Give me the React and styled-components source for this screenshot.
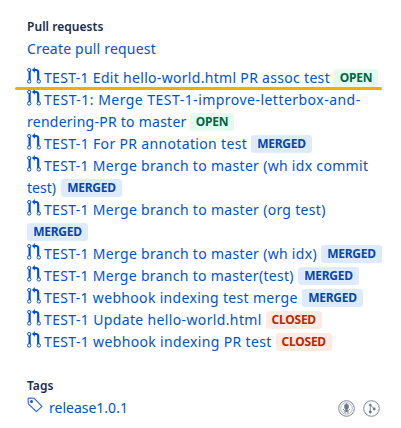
import React from "react";
import styled, { createGlobalStyle } from "styled-components";

const GlobalStyle = createGlobalStyle`
  * { box-sizing: border-box; }
  body {
    margin: 0;
    background: #fff;
    font-family: "Segoe UI", "Noto Sans", "Open Sans", sans-serif;
  }
`;

const Panel = styled.main`
  position: relative;
  width: 401px;
  height: 428px;
  padding: 17px 21px 0 27px;
  color: #172b4d;
  font-size: 14px;
  line-height: 22px;
`;

const Heading = styled.h2`
  margin: 0;
  font-size: 12px;
  line-height: 20px;
  font-weight: 600;
  letter-spacing: ${(p) => p.$track || 0}px;
`;

const Link = styled.a`
  display: block;
  color: #0052cc;
  text-decoration: none;
  white-space: nowrap;
  letter-spacing: ${(p) => p.$track || 0}px;
`;

const CreateLink = styled(Link)`
  padding-top: 1px;
`;

const PullList = styled.ul`
  list-style: none;
  margin: 6px 0 0;
  padding: 0;
`;

const PullItem = styled.li`
  display: block;
`;

const Line = styled.div`
  display: flex;
  height: 22px;
  color: #0052cc;
  white-space: nowrap;
`;

const LineText = styled.span`
  flex: none;
  width: ${(p) => p.$width}px;
  line-height: 24px;
  letter-spacing: ${(p) => p.$track || 0}px;
`;

const PullIcon = styled.svg`
  flex: none;
  width: 14px;
  height: 17px;
  margin: 1px 3px 0 0;
`;

const tones = {
  OPEN: { bg: "#e3fcef", fg: "#006644", width: 44 },
  MERGED: { bg: "#deebff", fg: "#0747a6", width: 61 },
  CLOSED: { bg: "#ffebe6", fg: "#bf2600", width: 55.5 },
};

const Badge = styled.span`
  flex: none;
  width: ${(p) => tones[p.$tone].width}px;
  height: 18px;
  margin-top: 3px;
  border-radius: 3px;
  background: ${(p) => tones[p.$tone].bg};
  color: ${(p) => tones[p.$tone].fg};
  font-size: 12px;
  line-height: 18px;
  font-weight: 700;
  text-align: center;
  letter-spacing: -0.25px;
`;

const Underline = styled.div`
  position: absolute;
  left: 15px;
  top: 87px;
  width: 367px;
  height: 3px;
  border-radius: 2px;
  background: #faa90b;
`;

const TagSection = styled.section`
  margin-top: 24px;
`;

const TagRow = styled.div`
  display: flex;
  justify-content: space-between;
  height: 24px;
`;

const TagLink = styled(Link)`
  display: flex;
  gap: 6px;
  line-height: 24px;
`;

const TagIcon = styled.svg`
  width: 16px;
  height: 16px;
  margin-top: 1px;
`;

const Tools = styled.div`
  display: flex;
  gap: 8px;
  margin-top: 4px;
`;

const ToolIcon = styled.svg`
  width: 17px;
  height: 17px;
`;

function PullRequestGlyph() {
  return (
    <PullIcon viewBox="0 0 14 17" fill="none" stroke="#0052cc">
      <path d="M2.6 4V13" strokeWidth="2.2" />
      <path d="M6.5 3H9.2Q11.2 3 11.2 5.4V13" strokeWidth="2.2" />
      <path d="M7.9 0.3L5 3L7.9 5.6Z" fill="#0052cc" strokeWidth="0.2" />
      <circle cx="2.2" cy="3" r="1.6" fill="#fff" strokeWidth="1" />
      <circle cx="2.2" cy="14.4" r="1.7" fill="#fff" strokeWidth="1" />
      <circle cx="11.8" cy="14.4" r="1.7" fill="#fff" strokeWidth="1" />
    </PullIcon>
  );
}

const pulls = [
  [{ text: "TEST-1 Edit hello-world.html PR assoc test", width: 290, track: 0.31, status: "OPEN" }],
  [
    { text: "TEST-1: Merge TEST-1-improve-letterbox-and-", width: 330, track: 0.47 },
    { text: "rendering-PR to master", width: 163, track: 0.25, status: "OPEN" },
  ],
  [{ text: "TEST-1 For PR annotation test", width: 207, track: 0.34, status: "MERGED" }],
  [
    { text: "TEST-1 Merge branch to master (wh idx commit", width: 330, track: 0.31 },
    { text: "test)", width: 34, status: "MERGED" },
  ],
  [
    { text: "TEST-1 Merge branch to master (org test)", width: 300, track: 0.31 },
    { text: "", width: 0, status: "MERGED" },
  ],
  [{ text: "TEST-1 Merge branch to master (wh idx)", width: 277, track: 0.31, status: "MERGED" }],
  [{ text: "TEST-1 Merge branch to master(test)", width: 254, track: 0.3, status: "MERGED" }],
  [{ text: "TEST-1 webhook indexing test merge", width: 258, track: 0.32, status: "MERGED" }],
  [{ text: "TEST-1 Update hello-world.html", width: 222, track: 0.36, status: "CLOSED" }],
  [{ text: "TEST-1 webhook indexing PR test", width: 232, track: 0.35, status: "CLOSED" }],
];

export default function App() {
  return (
    <>
      <GlobalStyle />
      <Panel>
        <Heading $track={0.05}>Pull requests</Heading>
        <CreateLink $track={0.2}>Create pull request</CreateLink>
        <PullList>
          {pulls.map((lines, i) => (
            <PullItem key={i}>
              {lines.map((line, j) => (
                <Line key={j}>
                  {j === 0 && <PullRequestGlyph />}
                  <LineText $width={line.width} $track={line.track}>{line.text}</LineText>
                  {line.status && <Badge $tone={line.status}>{line.status}</Badge>}
                </Line>
              ))}
            </PullItem>
          ))}
        </PullList>
        <Underline />
        <TagSection>
          <Heading>Tags</Heading>
          <TagRow>
            <TagLink>
              <TagIcon viewBox="0 0 16 16" fill="none" stroke="#2a62d0" strokeWidth="1.1">
                <path d="M1 1.8L1.8 1L7.2 1.3L15 9.3L9.4 14.7L1.3 6.8Z" strokeLinejoin="round" />
                <circle cx="4.5" cy="4.5" r="1" fill="#0052cc" />
              </TagIcon>
              release1.0.1
            </TagLink>
            <Tools>
              <ToolIcon viewBox="0 0 17 17" fill="none" stroke="#7a869a">
                <circle cx="8.5" cy="8.5" r="7.8" />
                <circle cx="8.5" cy="8.5" r="5.8" strokeWidth="0.8" opacity="0.7" />
                <path d="M6.5 5L8.5 3.6L10.5 5V8L9.5 9.5V12H7.5V9.5L6.5 8Z" fill="#6b778c" strokeWidth="0.6" />
                <path d="M5 9L7 11V13.4M12 9L10 11V13.4" strokeWidth="0.9" />
              </ToolIcon>
              <ToolIcon viewBox="0 0 17 17" fill="none" stroke="#7a869a">
                <circle cx="8.5" cy="8.5" r="7.8" />
                <path d="M7.3 5V12M7.3 5.2L11.3 8.8" />
                <circle cx="7.3" cy="4.9" r="1.2" fill="#6b778c" stroke="none" />
                <circle cx="7.3" cy="12" r="1.4" fill="#6b778c" stroke="none" />
                <circle cx="11.2" cy="9" r="1.4" fill="#6b778c" stroke="none" />
              </ToolIcon>
            </Tools>
          </TagRow>
        </TagSection>
      </Panel>
    </>
  );
}
